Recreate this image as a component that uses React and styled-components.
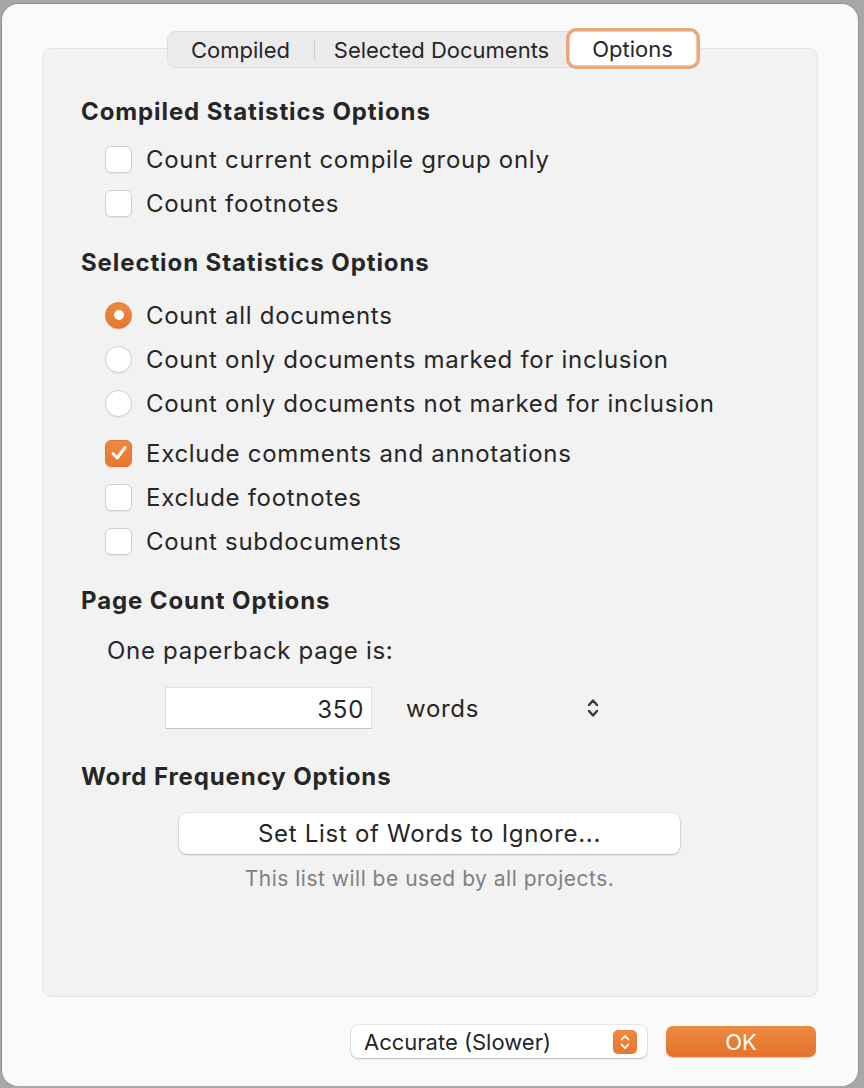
import styled, { createGlobalStyle } from "styled-components";

const ORANGE = "#e8772e";

const Global = createGlobalStyle`
    html, body {
        margin: 0;
        padding: 0;
        background: #a7a7a7;
    }
    body {
        font-family: Inter, "Noto Sans", "Liberation Sans", sans-serif;
        color: #262626;
        -webkit-font-smoothing: antialiased;
    }
`;

const CheckMark = () => (
    <svg width="20" height="20" viewBox="0 0 20 20">
        <path d="M4 10.5 L8.2 15 L16 4.5" fill="none" stroke="#fff" strokeWidth="3" strokeLinecap="round" strokeLinejoin="round" />
    </svg>
);

const UpDown = ({ color = "#3a3a3a", w = 14, h = 24, sw = 2.4 }) => (
    <svg width={w} height={h} viewBox="0 0 14 24">
        <path d="M3 9 L7 4.5 L11 9" fill="none" stroke={color} strokeWidth={sw} strokeLinecap="round" strokeLinejoin="round" />
        <path d="M3 15 L7 19.5 L11 15" fill="none" stroke={color} strokeWidth={sw} strokeLinecap="round" strokeLinejoin="round" />
    </svg>
);

const CheckRow = ({ label, checked }) => (
    <Row>
        <Box $checked={checked}>{checked && <CheckMark />}</Box>
        <Label>{label}</Label>
    </Row>
);

const RadioRow = ({ label, selected }) => (
    <Row>
        <Radio $selected={selected} />
        <Label>{label}</Label>
    </Row>
);

const App = () => {
    return (
        <>
            <Global />
            <Sheet>
                <Tabs>
                    <Tab $w={146}>Compiled</Tab>
                    <Divider />
                    <Tab $w={254}>Selected Documents</Tab>
                    <ActiveTab>Options</ActiveTab>
                </Tabs>

                <Panel>
                    <Heading>Compiled Statistics Options</Heading>
                    <Group $top={10}>
                        <CheckRow label="Count current compile group only" />
                        <CheckRow label="Count footnotes" />
                    </Group>

                    <Heading $top={23}>Selection Statistics Options</Heading>
                    <Group $top={15}>
                        <RadioRow label="Count all documents" selected />
                        <RadioRow label="Count only documents marked for inclusion" />
                        <RadioRow label="Count only documents not marked for inclusion" />
                    </Group>
                    <Group $top={6}>
                        <CheckRow label="Exclude comments and annotations" checked />
                        <CheckRow label="Exclude footnotes" />
                        <CheckRow label="Count subdocuments" />
                    </Group>

                    <Heading $top={23}>Page Count Options</Heading>
                    <Prompt>One paperback page is:</Prompt>
                    <InputRow>
                        <NumberField>350</NumberField>
                        <UnitPopup>
                            <span>words</span>
                            <UpDown />
                        </UnitPopup>
                    </InputRow>

                    <Heading $top={33}>Word Frequency Options</Heading>
                    <WideButton>Set List of Words to Ignore...</WideButton>
                    <Caption>This list will be used by all projects.</Caption>
                </Panel>

                <Footer>
                    <Popup>
                        <span>Accurate (Slower)</span>
                        <Stepper>
                            <UpDown color="#fff" w={12} h={20} sw={2.2} />
                        </Stepper>
                    </Popup>
                    <OkButton>OK</OkButton>
                </Footer>
            </Sheet>
        </>
    );
};

const Sheet = styled.div`
    width: 856px;
    height: 1082px;
    margin: 4px 0 0 2px;
    box-sizing: border-box;
    background: #fafafa;
    border-radius: 16px;
    box-shadow: 0 0 0 1px rgba(0, 0, 0, 0.12);
    padding: 27px 40px 0 40px;
    display: flex;
    flex-direction: column;
`;

const Tabs = styled.div`
    align-self: center;
    margin-left: 1px;
    display: flex;
    align-items: center;
    height: 37px;
    box-sizing: border-box;
    background: #ebebeb;
    border: 1px solid #dedede;
    border-radius: 9px;
    position: relative;
    z-index: 1;
    margin-bottom: -20px;
    font-size: 22px;
`;

const Tab = styled.div`
    width: ${(p) => p.$w}px;
    text-align: center;
    color: #262626;
`;

const Divider = styled.div`
    width: 1px;
    height: 20px;
    background: #d0d0d0;
`;

const ActiveTab = styled.div`
    width: 128px;
    height: 35px;
    box-sizing: border-box;
    margin: -2px -3px 0 0;
    display: flex;
    align-items: center;
    justify-content: center;
    background: #fff;
    border-radius: 7px;
    border: 1px solid #f0c9ad;
    box-shadow: 0 0 0 3px #e8a77d;
`;

const Panel = styled.div`
    height: 949px;
    box-sizing: border-box;
    background: #f2f2f2;
    border: 1px solid #e4e4e4;
    border-radius: 9px;
    padding: 48px 38px 0 38px;
    display: flex;
    flex-direction: column;
`;

const Heading = styled.div`
    height: 30px;
    line-height: 30px;
    font-size: 24px;
    letter-spacing: 0.9px;
    font-weight: 700;
    color: #262626;
    margin-top: ${(p) => p.$top || 0}px;
`;

const Group = styled.div`
    display: flex;
    flex-direction: column;
    margin-top: ${(p) => p.$top || 0}px;
    padding-left: 24px;
`;

const Row = styled.div`
    height: 44px;
    display: flex;
    align-items: center;
    gap: 14px;
`;

const Label = styled.span`
    font-size: 24px;
    letter-spacing: 0.7px;
    color: #262626;
`;

const Box = styled.div`
    width: 27px;
    height: 27px;
    box-sizing: border-box;
    border-radius: 6px;
    display: flex;
    align-items: center;
    justify-content: center;
    background: ${(p) => (p.$checked ? `linear-gradient(#ec8940, ${ORANGE})` : "#fff")};
    border: 1px solid ${(p) => (p.$checked ? "#e2762f" : "#cfcfcf")};
    box-shadow: 0 1px 1px rgba(0, 0, 0, 0.06);
`;

const Radio = styled.div`
    width: 27px;
    height: 27px;
    box-sizing: border-box;
    border-radius: 50%;
    display: flex;
    align-items: center;
    justify-content: center;
    background: ${(p) => (p.$selected ? `linear-gradient(#ec8940, ${ORANGE})` : "#fff")};
    border: 1px solid ${(p) => (p.$selected ? "#e2762f" : "#cfcfcf")};
    box-shadow: 0 1px 1px rgba(0, 0, 0, 0.06);

    &::after {
        content: "";
        display: ${(p) => (p.$selected ? "block" : "none")};
        width: 10px;
        height: 10px;
        border-radius: 50%;
        background: #fff;
    }
`;

const Prompt = styled.div`
    height: 30px;
    line-height: 30px;
    margin-top: 20px;
    padding-left: 26px;
    font-size: 24px;
    letter-spacing: 0.7px;
`;

const InputRow = styled.div`
    margin-top: 21px;
    padding-left: 84px;
    display: flex;
    align-items: center;
    gap: 34px;
    font-size: 24px;
    letter-spacing: 0.7px;
`;

const NumberField = styled.div`
    width: 207px;
    height: 42px;
    box-sizing: border-box;
    background: #fff;
    border: 1px solid #e0e0e0;
    border-bottom-color: #c4c4c4;
    text-align: right;
    line-height: 44px;
    padding-right: 7px;
`;

const UnitPopup = styled.div`
    width: 194px;
    display: flex;
    align-items: center;
    justify-content: space-between;
`;

const WideButton = styled.div`
    margin: 21px 0 0 98px;
    width: 501px;
    height: 41px;
    box-sizing: border-box;
    background: #fff;
    border-radius: 8px;
    box-shadow: 0 0 0 0.5px rgba(0, 0, 0, 0.12), 0 1px 2px rgba(0, 0, 0, 0.2);
    display: flex;
    align-items: center;
    justify-content: center;
    font-size: 24px;
    letter-spacing: 0.7px;
`;

const Caption = styled.div`
    margin: 13px 0 0 98px;
    width: 501px;
    text-align: center;
    font-size: 21px;
    letter-spacing: 0.5px;
    line-height: 24px;
    color: #808080;
`;

const Footer = styled.div`
    flex: 1;
    display: flex;
    align-items: center;
    justify-content: flex-end;
    gap: 19px;
    padding-right: 2px;
`;

const Popup = styled.div`
    width: 296px;
    height: 33px;
    box-sizing: border-box;
    background: #fff;
    border-radius: 7px;
    box-shadow: 0 0 0 0.5px rgba(0, 0, 0, 0.12), 0 1px 2px rgba(0, 0, 0, 0.22);
    display: flex;
    align-items: center;
    justify-content: space-between;
    padding: 0 10px 0 13px;
    font-size: 22px;
`;

const Stepper = styled.div`
    width: 24px;
    height: 24px;
    border-radius: 5px;
    background: linear-gradient(#ec8940, ${ORANGE});
    display: flex;
    align-items: center;
    justify-content: center;
`;

const OkButton = styled.div`
    width: 150px;
    height: 31px;
    border-radius: 7px;
    background: linear-gradient(#ec8b41, #e5712c);
    color: #fff;
    font-size: 22px;
    display: flex;
    align-items: center;
    justify-content: center;
    box-shadow: 0 0.5px 1px rgba(0, 0, 0, 0.15);
`;

export default App;
